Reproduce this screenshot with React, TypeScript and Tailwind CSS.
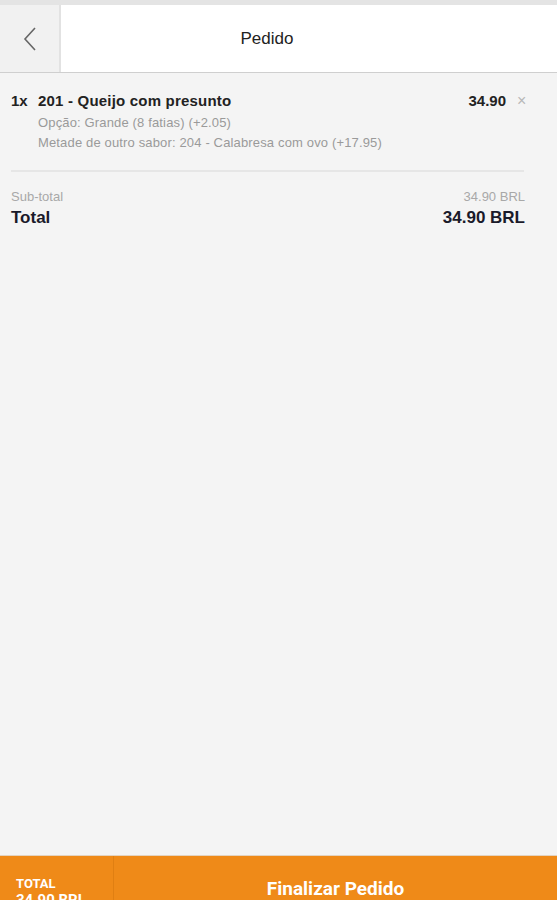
export default function App() {
  return (
    <div className="h-[900px] overflow-hidden bg-[#f4f4f4] font-['Liberation_Sans',Arial,sans-serif]">
      {/* top strip */}
      <div className="h-[5px] bg-[#e4e4e4]" />

      {/* header */}
      <header className="flex h-[68px] border-b border-[#cfcfcf] bg-white">
        <button className="flex w-[61px] items-center justify-center border-r-2 border-[#e2e2e2] bg-[#f1f1f1]">
          <svg width="16" height="26" viewBox="0 0 16 26" fill="none">
            <path d="M13 2 L3 13 L13 24" stroke="#666" strokeWidth="1.6" />
          </svg>
        </button>
        <div className="flex flex-1 items-center justify-center pr-[84px] text-[17px] text-[#222]">Pedido</div>
      </header>

      {/* body */}
      <main className="h-[782px] px-[11px] pt-[17px] pr-[32px]">
        <div className="flex items-start text-[15px] leading-[22px] text-[#222]">
          <span className="w-[27px] font-semibold">1x</span>
          <div className="flex-1">
            <div className="font-semibold tracking-[0.2px]">201 - Queijo com presunto</div>
            <div className="mt-[1px] text-[13px] leading-[20px] text-[#9a9a9a] tracking-[0.15px]">
              <div>Opção: Grande (8 fatias) (+2.05)</div>
              <div>Metade de outro sabor: 204 - Calabresa com ovo (+17.95)</div>
            </div>
          </div>
          <span className="font-semibold">34.90</span>
          <span className="ml-[11px] -mr-[4px] w-[12px] text-[16px] text-[#b8b8b8]">×</span>
        </div>

        <div className="mt-[17px] mr-[1px] border-t-2 border-[#e6e6e6]" />

        <div className="mt-[16px] flex items-center justify-between text-[13px] leading-[18px] text-[#a8a8a8]">
          <span>Sub-total</span>
          <span>34.90 BRL</span>
        </div>
        <div className="flex items-center justify-between text-[17px] leading-[24px] font-semibold text-[#1a1a2a]">
          <span>Total</span>
          <span>34.90 BRL</span>
        </div>
      </main>

      {/* footer */}
      <footer className="flex h-[64px] border-t border-[#e3d3c0] bg-[#ef8a18] font-['Roboto',sans-serif] text-white">
        <div className="w-[114px] border-r border-[#e07f12] pl-[16px] pt-[20px] text-[13px] font-bold leading-[16px]">
          <div>TOTAL</div>
          <div className="text-[15px]">34.90 BRL</div>
        </div>
        <div className="flex flex-1 items-start justify-center pt-[21px] text-[19px] leading-[24px] font-bold">Finalizar Pedido</div>
      </footer>
    </div>
  )
}
